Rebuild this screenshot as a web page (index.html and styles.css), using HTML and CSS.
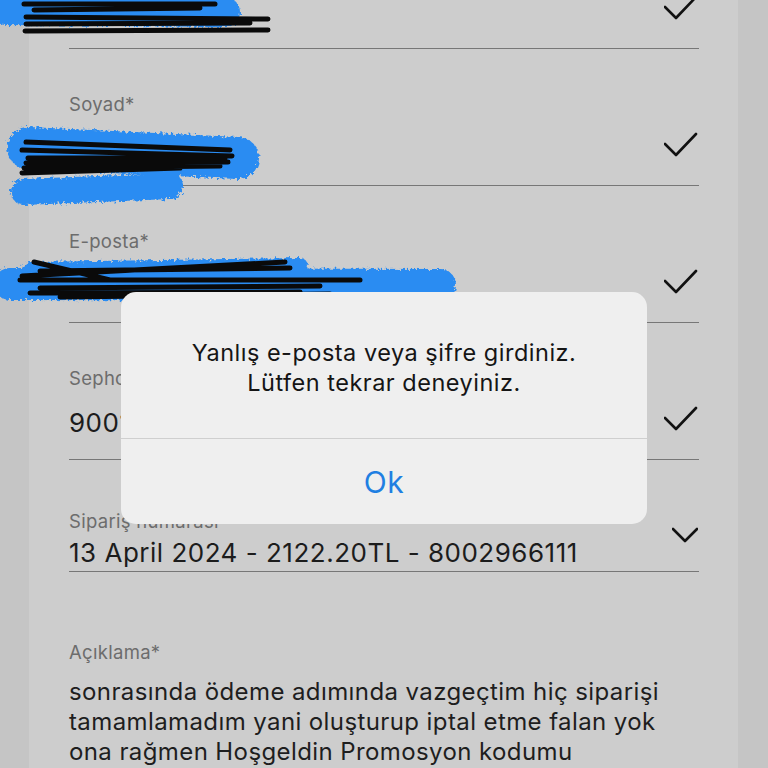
FILE: index.html
```html
<html>
  <head>
    <meta charset="utf-8">
    <link rel="stylesheet" href="styles.css">
  </head>
  <body>
    <div class="screen">
      <div class="side"></div>
      <div class="panel">
        <div class="form">
          <div class="field">
            <div class="label"></div>
            <div class="row">
              <div class="value"></div>
              <svg class="check" viewBox="0 0 34 26"><path d="M1 12 L12 23 L32 2"/></svg>
            </div>
            <div class="rule"></div>
          </div>

          <div class="field">
            <div class="label">Soyad*</div>
            <div class="row">
              <div class="value"></div>
              <svg class="check" viewBox="0 0 34 26"><path d="M1 12 L12 23 L32 2"/></svg>
            </div>
            <div class="rule"></div>
          </div>

          <div class="field">
            <div class="label">E-posta*</div>
            <div class="row">
              <div class="value"></div>
              <svg class="check" viewBox="0 0 34 26"><path d="M1 12 L12 23 L32 2"/></svg>
            </div>
            <div class="rule"></div>
          </div>

          <div class="field">
            <div class="label">Sephora Kart Numarası*</div>
            <div class="row">
              <div class="value">9001</div>
              <svg class="check" viewBox="0 0 34 26"><path d="M1 12 L12 23 L32 2"/></svg>
            </div>
            <div class="rule"></div>
          </div>

          <div class="field field-select">
            <div class="row">
              <div class="stack">
                <div class="label">Sipariş numarası</div>
                <div class="value">13 April 2024 - 2122.20TL - 8002966111</div>
              </div>
              <svg class="chevron" viewBox="0 0 26 16"><path d="M1 2 L13 14 L25 2"/></svg>
            </div>
            <div class="rule"></div>
          </div>

          <div class="field field-text">
            <div class="label">Açıklama*</div>
            <div class="textarea">
              sonrasında ödeme adımında vazgeçtim hiç siparişi<br>
              tamamlamadım yani oluşturup iptal etme falan yok<br>
              ona rağmen Hoşgeldin Promosyon kodumu
            </div>
          </div>
        </div>
      </div>
      <div class="side"></div>

      <!-- redaction scribbles drawn over the entered values -->
      <svg class="scribbles" viewBox="0 0 768 320" width="768" height="320">
        <defs>
          <filter id="rough" x="-5%" y="-20%" width="110%" height="140%">
            <feTurbulence type="fractalNoise" baseFrequency="0.35" numOctaves="2" result="n"/>
            <feDisplacementMap in="SourceGraphic" in2="n" scale="7"/>
          </filter>
        </defs>
        <g class="blue" filter="url(#rough)">
          <path d="M6 10 L225 12" stroke-width="30"/>
          <path d="M28 148 L238 158" stroke-width="42"/>
          <path d="M24 192 L170 186" stroke-width="26"/>
          <path d="M10 284 L440 285" stroke-width="32"/>
          <path d="M30 270 L300 266" stroke-width="16"/>
        </g>
        <g class="ink">
          <path d="M24 4 L215 4 M34 10 L200 8 M26 17 L268 19 M26 24 L250 23 M25 31 L268 30" stroke-width="5"/>
          <path d="M26 142 L230 150 M22 150 L232 156 M28 158 L225 158 M26 163 L228 162 M24 168 L220 166 M22 173 L180 168" stroke-width="5"/>
          <path d="M34 262 L110 280 M22 276 L285 262 M20 280 L360 280 M40 288 L320 286 M30 293 L300 292 M60 297 L330 294 M40 271 L290 268" stroke-width="5"/>
        </g>
      </svg>

      <div class="alert">
        <div class="alert-msg">Yanlış e-posta veya şifre girdiniz.<br>Lütfen tekrar deneyiniz.</div>
        <div class="alert-btn">Ok</div>
      </div>
    </div>
  </body>
</html>
```

FILE: styles.css
```css
body {
  margin: 0;
  background-color: #c5c5c5;
  font-family: Inter, "Noto Sans", sans-serif;
}
.screen {
  position: relative;
  width: 768px;
  height: 768px;
  overflow: hidden;
  display: flex;
}
.side {
  width: 29px;
  background-color: #c5c5c5;
}
.panel {
  width: 709px;
  background-color: #cdcdcd;
}
.form {
  margin-top: -88px;
  padding: 0 39px 0 40px;
}
.field {
  padding-top: 44px;
}
.label {
  height: 22px;
  font-size: 18.5px;
  line-height: 22px;
  letter-spacing: 0.3px;
  color: #6c6c6c;
}
.row {
  height: 60px;
  display: flex;
  align-items: center;
  justify-content: space-between;
}
.value {
  font-size: 26px;
  line-height: 30px;
  letter-spacing: 0.5px;
  color: #1c1c1c;
  padding-top: 8px;
}
.check {
  width: 34px;
  height: 26px;
  margin-right: 1px;
}
.check path, .chevron path {
  fill: none;
  stroke: #111;
  stroke-width: 2.6;
  stroke-linecap: round;
  stroke-linejoin: round;
}
.rule {
  margin-top: 10px;
  height: 1px;
  background-color: #777;
}
.field-select {
  padding-top: 50px;
}
.field-select .row {
  height: auto;
}
.field-select .value {
  padding-top: 0;
  margin-top: 6px;
}
.chevron {
  width: 26px;
  height: 16px;
  margin-right: 1px;
  margin-top: -8px;
}
.field-select .rule {
  margin-top: 3px;
}
.field-text {
  padding-top: 69px;
}
.textarea {
  margin-top: 14px;
  font-size: 24px;
  line-height: 30px;
  letter-spacing: 0.4px;
  color: #1e1e1e;
}
.scribbles {
  position: absolute;
  left: 0;
  top: 0;
}
.scribbles path {
  fill: none;
  stroke-linecap: round;
}
.blue path {
  stroke: #2b8cf2;
}
.ink path {
  stroke: #0a0a0a;
}
.alert {
  position: absolute;
  left: 121px;
  top: 292px;
  width: 526px;
  border-radius: 15px;
  background-color: #efefef;
  overflow: hidden;
}
.alert-msg {
  padding: 46px 20px 40px;
  text-align: center;
  font-size: 23.5px;
  line-height: 30px;
  letter-spacing: 0.5px;
  color: #151515;
}
.alert-btn {
  border-top: 1px solid #cfcfcf;
  height: 85px;
  display: flex;
  align-items: center;
  justify-content: center;
  font-size: 30px;
  letter-spacing: 0.5px;
  color: #1f7fe2;
}
```
